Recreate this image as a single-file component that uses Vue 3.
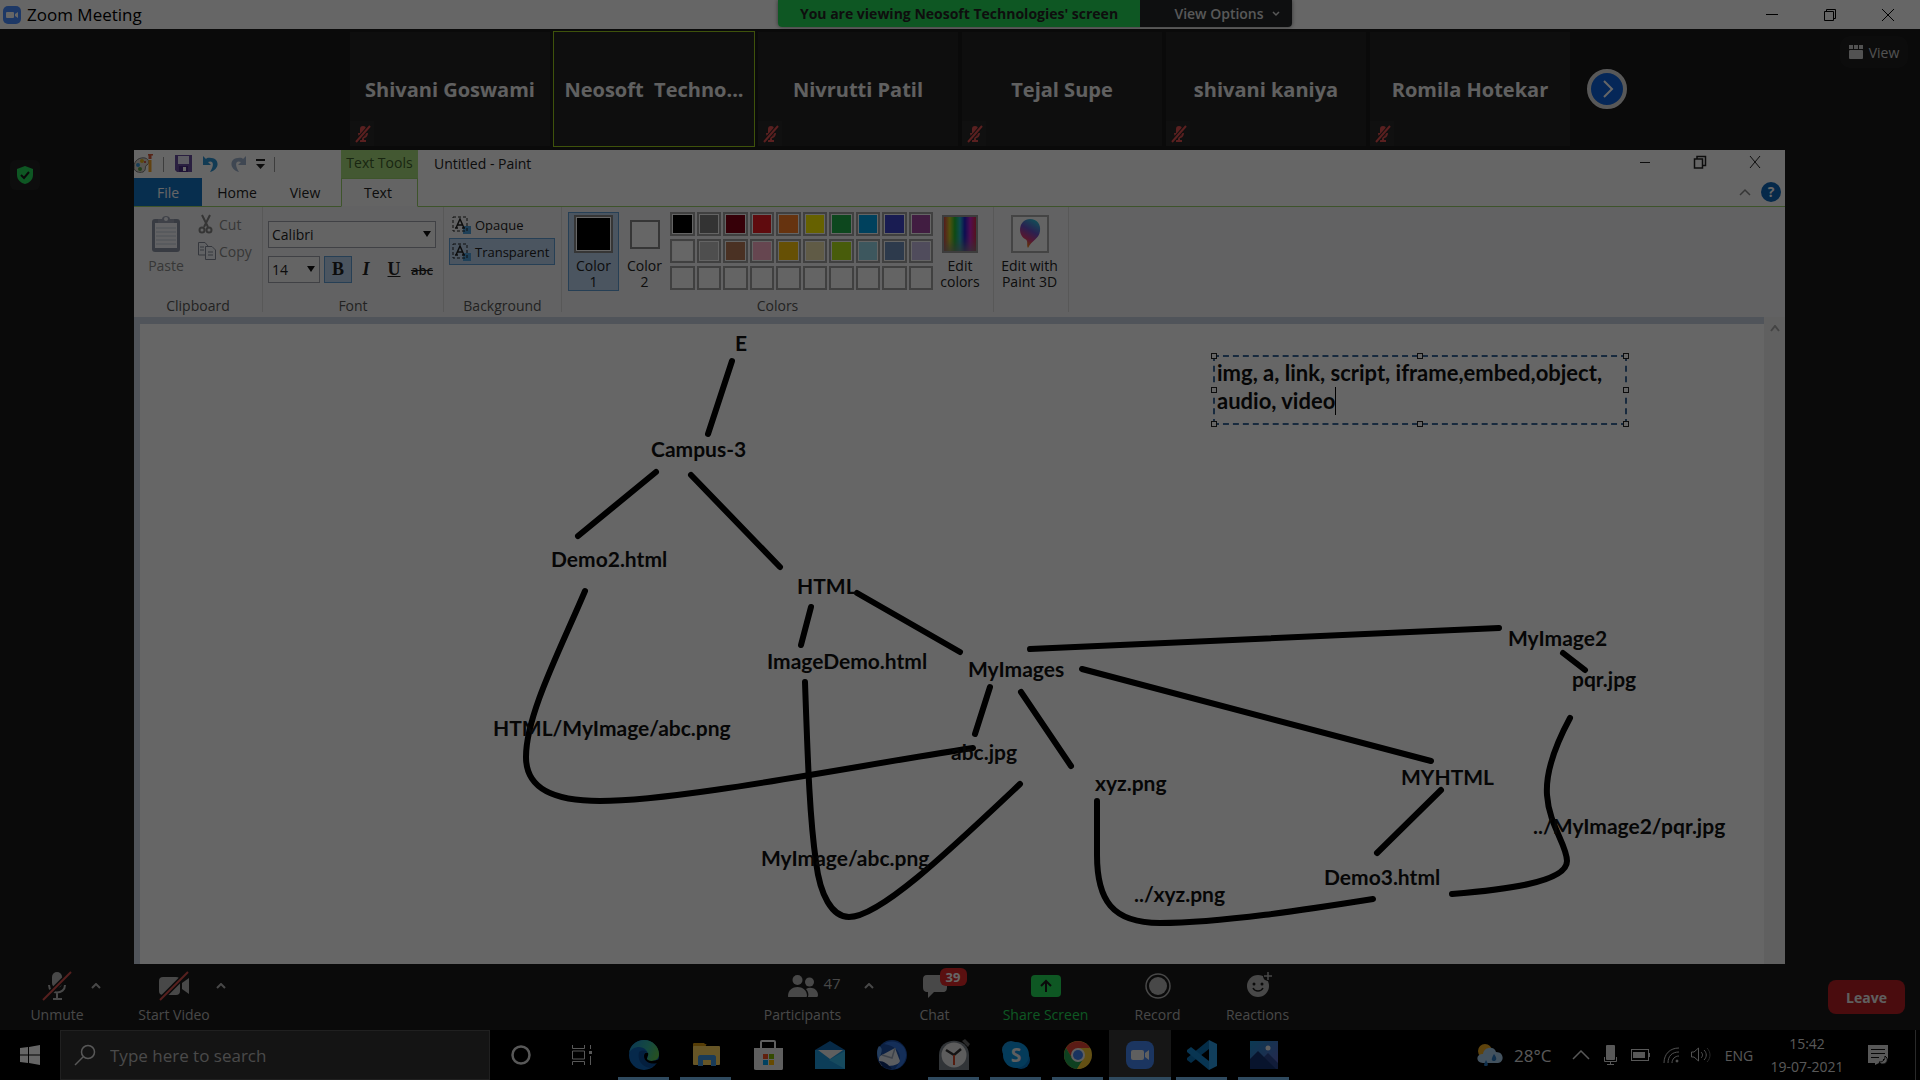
<script setup>
import { ref } from 'vue'

const tiles = [
  { name: 'Shivani Goswami', muted: true },
  { name: 'Neosoft\u00a0 Techno...', muted: false, active: true },
  { name: 'Nivrutti Patil', muted: true },
  { name: 'Tejal Supe', muted: true },
  { name: 'shivani kaniya', muted: true },
  { name: 'Romila Hotekar', muted: true },
]

const palette = [
  '#000000', '#7f7f7f', '#880015', '#ed1c24', '#ff7f27', '#fff200', '#22b14c', '#00a2e8', '#3f48cc', '#a349a4',
  '#ffffff', '#c3c3c3', '#b97a57', '#ffaec9', '#ffc90e', '#efe4b0', '#b5e61d', '#99d9ea', '#7092be', '#c8bfe7',
  '', '', '', '', '', '', '', '', '', '',
]

const strokes = [
  'M732 361 L708 434',
  'M656 472 L578 536',
  'M691 475 L780 567',
  'M811 607 L801 645',
  'M857 593 L960 652',
  'M990 687 L975 734',
  'M1021 692 L1071 766',
  'M1030 649 L1499 628',
  'M1082 669 L1431 761',
  'M1441 790 L1377 853',
  'M1563 653 L1585 670',
  'M585 591 C560 650 526 715 526 757 C526 788 552 801 600 801 C680 801 860 765 973 748',
  'M805 682 C808 770 810 820 816 862 C820 895 832 917 849 917 C880 917 950 850 1020 784',
  'M1097 801 L1097 855 C1097 900 1112 923 1160 923 C1220 923 1310 909 1373 899',
  'M1570 718 C1550 755 1546 780 1547 795 C1549 825 1567 845 1567 861 C1567 883 1500 890 1452 894',
]

const labels = [
  { t: 'E', x: 735, y: 351 },
  { t: 'Campus-3', x: 651, y: 457 },
  { t: 'Demo2.html', x: 551, y: 567 },
  { t: 'HTML', x: 797, y: 594 },
  { t: 'ImageDemo.html', x: 767, y: 669 },
  { t: 'MyImages', x: 968, y: 677 },
  { t: 'HTML/MyImage/abc.png', x: 493, y: 736 },
  { t: 'abc.jpg', x: 951, y: 760 },
  { t: 'MyImage/abc.png', x: 761, y: 866 },
  { t: 'xyz.png', x: 1095, y: 791 },
  { t: '../xyz.png', x: 1134, y: 902 },
  { t: 'Demo3.html', x: 1324, y: 885 },
  { t: 'MYHTML', x: 1401, y: 785 },
  { t: 'MyImage2', x: 1508, y: 646 },
  { t: 'pqr.jpg', x: 1572, y: 687 },
  { t: '../MyImage2/pqr.jpg', x: 1533, y: 834 },
]

const note = ref('img, a, link, script, iframe,embed,object,\naudio, video')
const handles = ['nw', 'n', 'ne', 'w', 'e', 'sw', 's', 'se']
const background = ref('transparent')
</script>

<template>
  <div class="screen">
    <header class="titlebar">
      <div class="app-title">
        <svg width="18" height="18" viewBox="0 0 18 18" aria-hidden="true">
          <rect width="18" height="18" rx="5" fill="#4a8cff" />
          <rect x="3" y="6" width="8" height="6" rx="1" fill="#fff" />
          <path d="M12 8 L15 6 V12 L12 10 Z" fill="#fff" />
        </svg>
        <span>Zoom Meeting</span>
      </div>
      <div class="banner">
        <span class="viewing">You are viewing Neosoft Technologies' screen</span>
        <button class="view-options">
          View Options
          <svg width="8" height="6" viewBox="0 0 8 6" aria-hidden="true"><path d="M1 1 L4 4 L7 1" fill="none" stroke="#ddd" stroke-width="1.5" /></svg>
        </button>
      </div>
      <div class="win-controls">
        <button aria-label="Minimize"><svg width="14" height="14" viewBox="0 0 14 14"><path d="M1 6.500 H13" stroke="#000" /></svg></button>
        <button aria-label="Restore"><svg width="14" height="14" viewBox="0 0 14 14" fill="none" stroke="#000"><path d="M1.500 3.500 H10.500 V12.500 H1.500 Z M3.500 3.500 V1.500 H12.500 V10.500 H10.500" /></svg></button>
        <button aria-label="Close"><svg width="14" height="14" viewBox="0 0 14 14"><path d="M1 1 L13 13 M13 1 L1 13" stroke="#000" /></svg></button>
      </div>
    </header>

    <section class="gallery" aria-label="Participants">
      <div class="strip">
        <div v-for="t in tiles" :key="t.name" class="tile" :class="{ active: t.active }">
          <span class="tile-name">{{ t.name }}</span>
          <span v-if="t.muted" class="tile-mic">
            <svg width="16" height="18" viewBox="0 0 16 18" aria-hidden="true">
              <rect x="5" y="1" width="6" height="10" rx="3" fill="#e05050" />
              <path d="M4 8 C4 14 12 14 12 8 M8 12 V16 M5 16 H11" fill="none" stroke="#e05050" stroke-width="2" />
              <path d="M1 17 L15 1" stroke="#242424" stroke-width="4" />
              <path d="M1 17 L15 1" stroke="#e05050" stroke-width="2" />
            </svg>
          </span>
        </div>
      </div>
      <button class="next" aria-label="Next participants">
        <svg width="12" height="20" viewBox="0 0 12 20"><path d="M2 2 L10 10 L2 18" fill="none" stroke="#fff" stroke-width="2" /></svg>
      </button>
      <button class="view-btn">
        <svg width="14" height="14" viewBox="0 0 14 14" fill="#ccc" aria-hidden="true"><rect width="4" height="4" /><rect x="5" width="4" height="4" /><rect x="10" width="4" height="4" /><rect y="5" width="14" height="9" rx="1" /></svg>
        View
      </button>
    </section>

    <main class="stage">
      <aside class="side">
        <span class="shield">
          <svg width="18" height="20" viewBox="0 0 18 20" aria-label="Encrypted" role="img">
            <path d="M9 1 L17 4 V10 C17 15 13 18 9 19 C5 18 1 15 1 10 V4 Z" fill="#23d959" />
            <path d="M5 10 L8 13 L13 7" fill="none" stroke="#1a1a1a" stroke-width="2" />
          </svg>
        </span>
      </aside>

      <div class="paint">
        <div class="paint-top">
          <div class="quick">
            <svg width="20" height="20" viewBox="0 0 20 20" aria-hidden="true">
              <path d="M0 13 C0 6 6 3 11 4 C15 5 16 9 13 11 C10 12 13 16 9 18 C5 19 0 18 0 13 Z" fill="#ddd8cc" stroke="#777" />
              <circle cx="4" cy="11" r="2" fill="#3a9ad9" /><circle cx="8" cy="7" r="2" fill="#e6b422" /><circle cx="6" cy="15" r="2" fill="#5aa04a" /><circle cx="11" cy="8" r="1" fill="#c33" />
              <path d="M14 0 H19 M16 1 V5" stroke="#d65a3a" stroke-width="3" /><path d="M16 6 V18" stroke="#f2a52c" stroke-width="3" />
            </svg>
            <i class="q-sep"></i>
            <svg width="18" height="18" viewBox="0 0 18 18" aria-hidden="true"><path d="M0 0 H17 V17 H2 L0 15 Z" fill="#6a4fa0" /><rect x="3" y="1" width="11" height="8" fill="#e9e6f4" /><rect x="4" y="11" width="9" height="6" fill="#4b2f86" /><rect x="8" y="12" width="3" height="4" fill="#fff" /></svg>
            <svg width="18" height="18" viewBox="0 0 18 18" aria-hidden="true"><path d="M1 1 V10 H9 L6 7 C11 5 13 9 8 17 C19 14 18 1 5 3 L4 4 Z" fill="#2e93d2" /></svg>
            <svg width="18" height="18" viewBox="0 0 18 18" aria-hidden="true"><path d="M17 1 V10 H9 L12 7 C7 5 5 9 10 17 C-1 14 0 1 13 3 L14 4 Z" fill="#9fb2cc" /></svg>
            <svg width="9" height="10" viewBox="0 0 9 10" aria-hidden="true"><path d="M0 1 H9" stroke="#222" stroke-width="2" /><path d="M0 5 H9 L4.500 10 Z" fill="#222" /></svg>
            <i class="q-sep"></i>
          </div>
          <span class="tools-tab">Text Tools</span>
          <span class="doc-title">Untitled - Paint</span>
          <div class="paint-controls">
            <button aria-label="Minimize Paint"><svg width="14" height="14" viewBox="0 0 14 14"><path d="M2 7.500 H12" stroke="#222" /></svg></button>
            <button aria-label="Restore Paint"><svg width="14" height="14" viewBox="0 0 14 14" fill="none" stroke="#222" stroke-width="1.500"><path d="M1.500 4 H9.500 V13 H1.500 Z M4 4 V1.500 H12.500 V10.500 H10" /></svg></button>
            <button aria-label="Close Paint"><svg width="14" height="14" viewBox="0 0 14 14"><path d="M2 1 L12 13 M12 1 L2 13" stroke="#222" /></svg></button>
          </div>
        </div>

        <nav class="tabs">
          <button class="tab file">File</button>
          <button class="tab home">Home</button>
          <button class="tab view">View</button>
          <button class="tab text">Text</button>
          <span class="tabs-fill">
            <svg width="12" height="8" viewBox="0 0 12 8" aria-hidden="true"><path d="M1 7 L6 2 L11 7" fill="none" stroke="#888" stroke-width="1.500" /></svg>
            <button class="help" aria-label="Help">?</button>
          </span>
        </nav>

        <div class="ribbon">
          <section class="group clipboard">
            <div class="group-body">
              <button class="tall muted">
                <svg width="32" height="38" viewBox="0 0 32 38" aria-hidden="true">
                  <rect x="2" y="4" width="28" height="33" rx="3" fill="#8d94a6" />
                  <rect x="5" y="8" width="22" height="25" fill="#f4f6fb" />
                  <path d="M6 13 H26 M6 17 H26 M6 21 H26 M6 25 H26 M6 29 H26" stroke="#c5cad8" />
                  <path d="M8 8 V4 H12 C12 0 20 0 20 4 H24 V8 Z" fill="#9ea4b4" /><circle cx="16" cy="4" r="2" fill="#f4f6fb" />
                </svg>
                Paste
              </button>
              <div class="stack">
                <button class="row muted">
                  <svg width="18" height="20" viewBox="0 0 18 20" fill="none" stroke="#858585" stroke-width="2" aria-hidden="true"><path d="M4 1 L10 13 M12 1 L6 13" /><circle cx="4" cy="16" r="2.500" /><circle cx="11" cy="16" r="2.500" /></svg>
                  Cut
                </button>
                <button class="row muted">
                  <svg width="18" height="20" viewBox="0 0 18 20" fill="#f3f5fa" stroke="#858b99" aria-hidden="true"><path d="M0.500 1.500 H7 L10 5 V14 H0.500 Z" /><path d="M7.500 5.500 H14 L17.500 9 V18.500 H7.500 Z" /><path d="M2 6 H6 M2 9 H6 M10 11 H15 M10 14 H15" /></svg>
                  Copy
                </button>
              </div>
            </div>
            <h2>Clipboard</h2>
          </section>

          <section class="group font">
            <div class="group-body col">
              <span class="pick"><select aria-label="Font family"><option>Calibri</option></select></span>
              <div class="font-row">
                <span class="pick small"><select aria-label="Font size"><option>14</option></select></span>
                <button class="fmt on" aria-label="Bold"><b>B</b></button>
                <button class="fmt" aria-label="Italic"><i>I</i></button>
                <button class="fmt" aria-label="Underline"><u>U</u></button>
                <button class="fmt strike" aria-label="Strikethrough"><s>abc</s></button>
              </div>
            </div>
            <h2>Font</h2>
          </section>

          <section class="group backdrop">
            <div class="group-body col tight">
              <button v-for="b in ['Opaque', 'Transparent']" :key="b" class="mode" :class="{ on: background === b.toLowerCase() }" @click="background = b.toLowerCase()">
                <svg width="20" height="20" viewBox="0 0 20 20" aria-hidden="true"><rect x="11" y="11" width="8" height="8" fill="#4ea0dc" /><rect x="1" y="2" width="14" height="14" fill="none" stroke="#222" stroke-dasharray="3 2" /><path d="M4 13 L8 4 L12 13 M5 10 H11 M3 13 H6 M10 13 H13" fill="none" stroke="#222" stroke-width="1.500" /></svg>
                {{ b }}
              </button>
            </div>
            <h2>Background</h2>
          </section>

          <section class="group colors">
            <div class="group-body">
              <button class="pot on"><span class="well black"></span>Color<br />1</button>
              <button class="pot"><span class="well white"></span>Color<br />2</button>
              <div class="palette">
                <button v-for="(c, i) in palette" :key="i" class="swatch" :aria-label="c || 'Empty color'"><span :style="{ background: c || '#fbfbfb' }"></span></button>
              </div>
              <button class="tall edit"><span class="rainbow"></span>Edit<br />colors</button>
            </div>
            <h2>Colors</h2>
          </section>

          <section class="group three-d">
            <div class="group-body">
              <button class="tall">
                <svg width="38" height="38" viewBox="0 0 38 38" aria-hidden="true">
                  <defs><linearGradient id="drop" x1="0.700" y1="0" x2="0.300" y2="1"><stop offset="0" stop-color="#2cc4dc" /><stop offset="0.400" stop-color="#6a52c8" /><stop offset="0.700" stop-color="#d43a7c" /><stop offset="0.900" stop-color="#ee7a20" /></linearGradient></defs>
                  <rect x="1" y="1" width="36" height="36" fill="#fafafa" stroke="#aaa" stroke-width="2" />
                  <path d="M19 4 C26 4 30 9 29 16 C28 24 21 25 17 33 C15 30 18 26 14 24 C6 19 8 4 19 4 Z" fill="url(#drop)" />
                </svg>
                Edit with<br />Paint 3D
              </button>
            </div>
          </section>
        </div>

        <div class="workspace">
          <div class="canvas">
            <svg class="drawing" width="1624" height="640" viewBox="140 324 1624 640">
              <path v-for="d in strokes" :key="d" :d="d" class="ink" />
              <text v-for="l in labels" :key="l.t" :x="l.x" :y="l.y" class="node">{{ l.t }}</text>
            </svg>
            <div class="textbox">
              <textarea v-model="note" aria-label="Canvas text" spellcheck="false"></textarea>
              <i class="cursor"></i>
              <i v-for="h in handles" :key="h" class="handle" :class="h"></i>
            </div>
          </div>
          <div class="scroll">
            <svg width="10" height="7" viewBox="0 0 10 7" aria-hidden="true"><path d="M1 6 L5 1 L9 6" fill="none" stroke="#aaa" stroke-width="2" /></svg>
          </div>
        </div>
      </div>
      <aside class="side right"></aside>
    </main>

    <footer class="controls">
      <div class="ctl-group left">
        <button class="ctl unmute">
          <span class="ico"><svg width="30" height="30" viewBox="0 0 30 30" aria-hidden="true">
            <rect x="10" y="1" width="10" height="16" rx="5" fill="#b4b4b4" /><path d="M7 14 C7 24 23 24 23 14 M15 21 V28 M11 28 H20" fill="none" stroke="#b4b4b4" stroke-width="2" />
            <path d="M1 29 L29 1" stroke="#1a1a1a" stroke-width="5" /><path d="M1 29 L29 1" stroke="#d8504c" stroke-width="2" />
          </svg></span>
          Unmute
        </button>
        <button class="caret" aria-label="Audio options"><svg width="10" height="6" viewBox="0 0 10 6"><path d="M1 5 L5 1 L9 5" fill="none" stroke="#b4b4b4" stroke-width="2" /></svg></button>
        <button class="ctl video">
          <span class="ico"><svg width="32" height="30" viewBox="0 0 32 30" aria-hidden="true">
            <rect x="1" y="6" width="21" height="18" rx="4" fill="#b4b4b4" /><path d="M24 12 L31 7 V23 L24 18 Z" fill="#b4b4b4" />
            <path d="M2 29 L30 1" stroke="#1a1a1a" stroke-width="5" /><path d="M2 29 L30 1" stroke="#d8504c" stroke-width="2" />
          </svg></span>
          Start Video
        </button>
        <button class="caret" aria-label="Video options"><svg width="10" height="6" viewBox="0 0 10 6"><path d="M1 5 L5 1 L9 5" fill="none" stroke="#b4b4b4" stroke-width="2" /></svg></button>
      </div>

      <div class="ctl-group center">
        <button class="ctl people">
          <span class="ico"><svg width="30" height="24" viewBox="0 0 30 24" fill="#b4b4b4" aria-hidden="true"><circle cx="9.500" cy="6" r="5" /><circle cx="21.500" cy="8" r="4.500" /><path d="M0 22 C0 10 19 10 19 22 C19 23 18 23 17 23 H2 C0 23 0 23 0 22 Z" /><path d="M20 23 C21 20 20 17 18 15 C23 12 30 15 30 21 C30 23 29 23 28 23 Z" /></svg><em>47</em></span>
          Participants
        </button>
        <button class="caret after-people" aria-label="Participant options"><svg width="10" height="6" viewBox="0 0 10 6"><path d="M1 5 L5 1 L9 5" fill="none" stroke="#b4b4b4" stroke-width="2" /></svg></button>
        <button class="ctl chat">
          <span class="ico"><svg width="26" height="24" viewBox="0 0 26 24" fill="#b4b4b4" aria-hidden="true"><path d="M5 1 H21 C24 1 25 3 25 5 V13 C25 16 24 18 21 18 H12 L6 24 V18 C2 18 1 16 1 13 V5 C1 3 2 1 5 1 Z" /></svg><strong>39</strong></span>
          Chat
        </button>
        <button class="ctl share">
          <span class="ico"><svg width="30" height="22" viewBox="0 0 30 22" aria-hidden="true"><rect width="30" height="22" rx="4" fill="#23d959" /><path d="M15 17 V6 M10 11 L15 6 L20 11" fill="none" stroke="#1a1a1a" stroke-width="2" /></svg></span>
          Share Screen
        </button>
        <button class="ctl record">
          <span class="ico"><svg width="26" height="26" viewBox="0 0 26 26" aria-hidden="true"><circle cx="13" cy="13" r="12" fill="none" stroke="#b4b4b4" stroke-width="1.500" /><circle cx="13" cy="13" r="9" fill="#b4b4b4" /></svg></span>
          Record
        </button>
        <button class="ctl react">
          <span class="ico"><svg width="30" height="30" viewBox="0 0 30 30" aria-hidden="true">
            <circle cx="15" cy="15" r="11" fill="#b4b4b4" /><circle cx="11" cy="13" r="1.500" fill="#1a1a1a" /><circle cx="19" cy="13" r="1.500" fill="#1a1a1a" /><path d="M10 17 C12 21 18 21 20 17" fill="none" stroke="#1a1a1a" stroke-width="1.500" />
            <circle cx="25" cy="5" r="5" fill="#1a1a1a" /><path d="M25 1 V9 M21 5 H29" stroke="#b4b4b4" stroke-width="1.500" />
          </svg></span>
          Reactions
        </button>
      </div>

      <button class="leave">Leave</button>
    </footer>

    <div class="taskbar">
      <button class="start" aria-label="Start"><svg width="20" height="20" viewBox="0 0 20 20" fill="#fff"><path d="M0 3 L8 2 V9.500 H0 Z M9 2 L20 0 V9.500 H9 Z M0 10.500 H8 V18 L0 17 Z M9 10.500 H20 V20 L9 18 Z" /></svg></button>
      <label class="search">
        <svg width="22" height="22" viewBox="0 0 22 22" fill="none" stroke="#ddd" stroke-width="1.500" aria-hidden="true"><circle cx="14" cy="8" r="6.500" /><path d="M9 13 L1 21" /></svg>
        <input type="text" placeholder="Type here to search" aria-label="Search" />
      </label>
      <button class="task narrow" aria-label="Cortana"><svg width="20" height="20" viewBox="0 0 20 20"><circle cx="10" cy="10" r="8.500" fill="none" stroke="#ddd" stroke-width="2.500" /></svg></button>
      <button class="task" aria-label="Task view"><svg width="20" height="20" viewBox="0 0 20 20" fill="none" stroke="#ddd"><path d="M0.500 0 V3.500 H12.500 V0 M0.500 20 V16.500 H12.500 V20 M0.500 6 H12.500 V14 H0.500 Z M18.500 0 V4 M18.500 11 V20" /><rect x="17.500" y="6.500" width="2" height="2" fill="#ddd" /></svg></button>
      <button class="task open" aria-label="Microsoft Edge">
        <svg width="32" height="32" viewBox="0 0 32 32">
          <defs><linearGradient id="edge-top" x1="0" y1="0.300" x2="1" y2="0.600"><stop offset="0" stop-color="#1c8fd0" /><stop offset="0.600" stop-color="#36b8a0" /><stop offset="1" stop-color="#62c950" /></linearGradient></defs>
          <circle cx="16" cy="16" r="15" fill="#1068bc" />
          <path d="M1 14 C2 6 9 1 16 1 C25 1 31 8 31 15 C31 20 27 22 23 22 C19 22 18 20 20 18 C21 12 16 8 11 8 C7 8 3 10 1 14 Z" fill="url(#edge-top)" />
          <path d="M11 13 C9 20 13 28 22 29 C26 27 28 25 29 23 C24 26 17 24 16 18 C15 15 17 13 19 13 C17 11 13 11 11 13 Z" fill="#0c4f9c" />
          <path d="M16 17 C16 14 18 13 20 14 C21 16 19 17 19 20 C20 22 24 23 32 20 C32 23 31 24 29 24 C23 26 16 23 16 17 Z" fill="#000" />
        </svg>
      </button>
      <button class="task open" aria-label="File Explorer">
        <svg width="30" height="28" viewBox="0 0 30 28"><path d="M2 3 C2 2 3 2 3 2 H13 L15 4 L14 8 H2 Z" fill="#d89a10" /><rect x="2" y="5" width="27" height="19" rx="1" fill="#ffd460" /><path d="M2 5 H13 L16 3 H2 Z" fill="#d89a10" /><path d="M7 25 V16 C7 15 8 14 9 14 H23 C24 14 25 15 25 16 V25 H20 V19 H12 V25 Z" fill="#3f93dc" /></svg>
      </button>
      <button class="task" aria-label="Microsoft Store">
        <svg width="30" height="30" viewBox="0 0 30 30"><path d="M8 9 V2 C8 1 8 1 9 1 H21 C22 1 22 1 22 2 V9" fill="none" stroke="#eee" stroke-width="2" /><path d="M1 8 H30 V28 C30 30 29 30 28 30 H3 C1 30 1 29 1 28 Z" fill="#eee" /><rect x="10" y="14" width="5" height="5" fill="#f25022" /><rect x="16" y="14" width="5" height="5" fill="#7fba00" /><rect x="10" y="20" width="5" height="5" fill="#00a4ef" /><rect x="16" y="20" width="5" height="5" fill="#ffb900" /></svg>
      </button>
      <button class="task" aria-label="Mail">
        <svg width="30" height="30" viewBox="0 0 30 30"><path d="M0 10 L15 1 L30 10 V29 H0 Z" fill="#1068b0" /><path d="M0 10 H30 V29 H0 Z" fill="#2098dc" /><path d="M30 11 V29 L14 20 Z" fill="#38b8ec" /><path d="M3 10 H28 L15 19 Z" fill="#eee" /></svg>
      </button>
      <button class="task" aria-label="Thunderbird">
        <svg width="32" height="32" viewBox="0 0 32 32"><circle cx="16" cy="16" r="15" fill="#1c50a8" /><path d="M8 5 C16 -1 31 4 30 17 C29 24 25 29 19 30 C29 18 23 7 8 5 Z" fill="#3474dc" /><path d="M3 7 C8 9 5 15 3 20 C0 15 1 10 3 7 Z" fill="#5a9ae8" /><path d="M6 27 C1 21 3 17 6 16 L19 9 L24 22 C22 27 14 27 6 27 Z" fill="#e4e8f0" /><path d="M6 16 L16 19 L19 9" fill="none" stroke="#9aa6ba" stroke-width="1.500" /><path d="M3 22 C8 22 12 25 16 30 C9 30 5 27 3 22 Z" fill="#0c2c6c" /></svg>
      </button>
      <button class="task open" aria-label="Alarms and Clock">
        <svg width="32" height="32" viewBox="0 0 32 32"><path d="M1 31 V16 C1 -3 31 -3 31 16 V31 Z" fill="#7a828a" /><path d="M24 2 L27 0 L32 5 L30 8 Z" fill="#666" /><circle cx="16" cy="16" r="12.500" fill="#e8e8e8" /><path d="M8 11 L16 16 L23 10" fill="none" stroke="#333" stroke-width="2.500" /><path d="M16 16 V26" stroke="#d84a2a" stroke-width="2" /></svg>
      </button>
      <button class="task open" aria-label="Skype">
        <svg width="30" height="30" viewBox="0 0 30 30"><circle cx="10" cy="10" r="9" fill="#1890d8" /><circle cx="20" cy="20" r="9" fill="#0878c8" /><circle cx="15" cy="15" r="13" fill="#0c94e0" /><text x="15" y="22" text-anchor="middle" class="skype-s">S</text></svg>
      </button>
      <button class="task open" aria-label="Google Chrome">
        <svg width="30" height="30" viewBox="0 0 30 30"><circle cx="15" cy="15" r="14" fill="#f8c834" /><path d="M3 8 C8 -1 22 -1 27 8 H15 L9 18 Z" fill="#e04436" /><path d="M3 8 L9 18 L21 18 L14 29 C3 28 -2 17 3 8 Z" fill="#24a050" /><path d="M27 8 C31 17 25 29 14 29 L21 18 V12 L15 8 Z" fill="#f8c834" /><circle cx="15" cy="15" r="7" fill="#eee" /><circle cx="15" cy="15" r="5" fill="#4080ee" /></svg>
      </button>
      <button class="task open current" aria-label="Zoom">
        <svg width="28" height="28" viewBox="0 0 28 28"><rect width="28" height="28" rx="8" fill="#4484f0" /><rect x="5" y="9" width="13" height="10" rx="2" fill="#eee" /><path d="M19 12 L23 9 V19 L19 16 Z" fill="#eee" /></svg>
      </button>
      <button class="task open" aria-label="Visual Studio Code">
        <svg width="30" height="30" viewBox="0 0 30 30"><path d="M22 0 L30 4 V26 L22 30 Z" fill="#2c9ce4" /><path d="M22 0 V9 L4 23 L0 20 V18 Z" fill="#0c70b4" /><path d="M22 30 V21 L4 7 L0 10 V12 Z" fill="#1484cc" /></svg>
      </button>
      <button class="task open" aria-label="Photos">
        <svg width="28" height="28" viewBox="0 0 28 28"><defs><linearGradient id="sky" x1="0" y1="0" x2="1" y2="1"><stop offset="0" stop-color="#1c90d0" /><stop offset="1" stop-color="#6460c0" /></linearGradient></defs><rect width="28" height="28" fill="url(#sky)" /><path d="M11 19 L18 12 L28 22 V28 H11 Z" fill="#2c4890" /><path d="M0 18 L8 10 L26 28 H0 Z" fill="#143470" /><circle cx="18" cy="7" r="2.500" fill="#eee" /></svg>
      </button>

      <div class="tray">
        <button class="weather">
          <svg width="28" height="24" viewBox="0 0 28 24" aria-hidden="true"><circle cx="9" cy="8" r="7" fill="#eca820" /><path d="M7 20 C-1 20 0 10 7 11 C8 3 19 3 20 9 C29 9 28 20 22 20 Z" fill="#a8ccec" /><path d="M18 11 C22 16 20 18 18 18 C15 18 15 16 18 11 Z M10 17 C13 22 12 23 10 23 C7 23 8 21 10 17 Z" fill="#2878c0" /></svg>
          28°C
        </button>
        <button class="cell" aria-label="Hidden icons"><svg width="18" height="10" viewBox="0 0 18 10"><path d="M1 9 L9 1 L17 9" fill="none" stroke="#ddd" stroke-width="1.500" /></svg></button>
        <span class="cell"><svg width="14" height="20" viewBox="0 0 14 20" aria-hidden="true"><rect x="2" y="0" width="9" height="15" rx="1" fill="#ddd" /><path d="M0.500 12 V16.500 H12.500 V12 M6.500 17 V19.500 M3 19.500 H10" fill="none" stroke="#ddd" /></svg></span>
        <span class="cell"><svg width="20" height="12" viewBox="0 0 20 12" aria-hidden="true"><rect x="0.500" y="0.500" width="17" height="11" fill="none" stroke="#ddd" /><rect x="2" y="3" width="12" height="6" fill="#ddd" /><rect x="18" y="4" width="1" height="4" fill="#ddd" /></svg></span>
        <span class="cell"><svg width="16" height="16" viewBox="0 0 16 16" fill="none" stroke="#ccc" aria-hidden="true"><path d="M1 16 C1 7 7 1 16 1 M5 16 C5 9 9 5 16 5 M9 16 C9 12 12 9 16 9" /><circle cx="14" cy="14" r="1" fill="#ccc" /></svg></span>
        <span class="cell"><svg width="20" height="18" viewBox="0 0 20 18" fill="none" stroke="#ccc" aria-hidden="true"><path d="M0.500 6 H3 L7.500 2 V15 L3 11 H0.500 Z M10 6 C12 8 12 10 10 12 M13 4 C16 7 16 11 13 14" /><path d="M16 2 C20 6 20 12 16 16" stroke="#666" /></svg></span>
        <button class="lang">ENG</button>
        <button class="clock"><span>15:42</span><span>19-07-2021</span></button>
        <button class="notify" aria-label="Notifications"><svg width="22" height="20" viewBox="0 0 22 20"><path d="M1 0 H21 V14 H16 V18 H12 L8 20 V18 H1 Z" fill="#ddd" /><path d="M4 4.500 H18 M4 8.500 H18 M4 12.500 H12" stroke="#111" /><path d="M18 11 C18 15 16 17 12 17 C14 21 22 19 20 13 Z" fill="#ddd" stroke="#111" /></svg></button>
      </div>
    </div>
    <div class="dim"></div>
  </div>
</template>

<style>
body {
  margin: 0;
  background: #000;
}
</style>

<style scoped>
.screen {
  position: relative;
  display: flex;
  flex-direction: column;
  min-height: 100vh;
  background: #1a1a1a;
  font-family: "Open Sans", "Noto Sans", sans-serif;
  font-size: 14px;
  color: #222;
}
.dim {
  position: absolute;
  inset: 0;
  background: rgba(0, 0, 0, 0.6);
  pointer-events: none;
  z-index: 10;
}
button,
select,
input,
textarea {
  font: inherit;
  color: inherit;
  border: 0;
  padding: 0;
  margin: 0;
  background: none;
  border-radius: 0;
  outline: none;
  box-sizing: border-box;
}
svg {
  display: block;
  flex: none;
}

.titlebar {
  display: flex;
  height: 29px;
  background: #fff;
}
.app-title {
  flex: 31 1 0;
  display: flex;
  align-items: center;
  gap: 6px;
  padding-left: 3px;
  box-sizing: border-box;
  font-size: 17px;
  color: #000;
}
.banner {
  display: flex;
  width: 514px;
  height: 27px;
  border-radius: 0 0 4px 4px;
  overflow: hidden;
  box-shadow: 0 0 4px rgba(0, 0, 0, 0.5);
}
.viewing {
  width: 362px;
  line-height: 27px;
  text-align: center;
  background: #23d959;
  color: #242424;
  font-weight: 700;
}
.view-options {
  flex: 1;
  display: flex;
  align-items: center;
  justify-content: center;
  gap: 8px;
  padding-left: 22px;
  background: #23272a;
  color: #ddd;
  font-weight: 600;
}
.win-controls {
  flex: 25 1 0;
  display: flex;
  justify-content: flex-end;
  padding-right: 3px;
  box-sizing: border-box;
}
.win-controls button {
  width: 58px;
  display: flex;
  align-items: center;
  justify-content: center;
}

.gallery {
  position: relative;
  display: flex;
  align-items: center;
  justify-content: center;
  height: 121px;
  padding-bottom: 1px;
  box-sizing: border-box;
}
.strip {
  display: flex;
  gap: 4px;
}
.tile {
  position: relative;
  width: 200px;
  height: 114px;
  box-sizing: border-box;
  display: flex;
  align-items: center;
  justify-content: center;
  background: #242424;
}
.tile.active {
  outline: 1px solid #9ccc1c;
}
.tile-name {
  font-size: 20px;
  font-weight: 700;
  color: #f0f0f0;
  white-space: nowrap;
}
.tile-mic {
  position: absolute;
  left: 0;
  bottom: 0;
  width: 24px;
  height: 25px;
  display: flex;
  align-items: center;
  justify-content: center;
  padding-left: 1px;
  box-sizing: border-box;
  background: #2a2a2a;
}
.next {
  position: absolute;
  left: calc(50% + 627px);
  width: 40px;
  height: 40px;
  border: 4px solid #ddd;
  border-radius: 50%;
  background: #0e63dc;
  display: flex;
  align-items: center;
  justify-content: center;
  padding-left: 2px;
}
.view-btn {
  position: absolute;
  right: 12px;
  top: 7px;
  width: 68px;
  height: 32px;
  border-radius: 10px;
  background: #1f1f1f;
  color: #ccc;
  display: flex;
  align-items: center;
  justify-content: center;
  gap: 6px;
}

.stage {
  flex: 1;
  display: flex;
}
.side {
  width: 134px;
}
.side.right {
  width: 135px;
}
.shield {
  display: flex;
  align-items: center;
  justify-content: center;
  width: 30px;
  height: 30px;
  margin: 10px;
  border-radius: 6px;
  background: #222;
}
.paint {
  flex: 1;
  display: flex;
  flex-direction: column;
  background: #fff;
}
.paint-top {
  display: flex;
  height: 28px;
}
.quick {
  display: flex;
  align-items: center;
  gap: 9px;
  width: 207px;
}
.q-sep {
  width: 1px;
  height: 15px;
  margin-right: 2px;
  background: #999;
}
.tools-tab {
  width: 77px;
  line-height: 26px;
  text-align: center;
  background: #a7dc7e;
  color: #3f5f2c;
}
.doc-title {
  margin-left: 16px;
  line-height: 28px;
}
.paint-controls {
  display: flex;
  margin-left: auto;
  padding-right: 3px;
}
.paint-controls button {
  width: 55px;
  height: 24px;
  display: flex;
  align-items: center;
  justify-content: center;
}

.tabs {
  display: flex;
  height: 29px;
}
.tab {
  border-bottom: 1px solid #9bd26c;
}
.tab.file {
  width: 68px;
  background: #1373c4;
  color: #fff;
}
.tab.home {
  width: 70px;
}
.tab.view {
  width: 69px;
  padding-right: 3px;
}
.tab.text {
  width: 77px;
  padding-right: 3px;
  border: 1px solid #9bd26c;
  border-bottom-color: #f5f6f7;
  background: #f9f9f9;
}
.tabs-fill {
  flex: 1;
  display: flex;
  align-items: center;
  justify-content: flex-end;
  gap: 10px;
  padding-right: 4px;
  border-bottom: 1px solid #9bd26c;
}
.help {
  width: 20px;
  height: 20px;
  border-radius: 50%;
  background: #0e66b8;
  color: #fff;
  font-weight: 700;
  line-height: 20px;
}

.ribbon {
  display: flex;
  height: 110px;
  background: #f5f6f7;
}
.group {
  display: flex;
  flex-direction: column;
  box-sizing: border-box;
  height: 105px;
  border-right: 1px solid #dcdcdc;
}
.group-body {
  flex: 1;
  display: flex;
}
.group-body.col {
  flex-direction: column;
}
.group h2 {
  margin: 0;
  font-size: 14px;
  font-weight: 400;
  line-height: 20px;
  height: 16px;
  text-align: center;
  color: #555;
}
.clipboard {
  width: 129px;
}
.font {
  width: 181px;
}
.backdrop {
  width: 118px;
}
.colors {
  width: 432px;
}
.three-d {
  width: 75px;
}
.muted {
  color: #8a8a8a;
}
.tall {
  display: flex;
  flex-direction: column;
  align-items: center;
  line-height: 16px;
  padding-top: 8px;
  gap: 5px;
  height: 84px;
}
.clipboard .tall {
  width: 64px;
}
.stack {
  display: flex;
  flex-direction: column;
  gap: 7px;
  padding-top: 7px;
}
.row {
  display: flex;
  align-items: center;
  gap: 3px;
  height: 20px;
}
.pick {
  position: relative;
  width: 168px;
  height: 27px;
  margin: 14px 0 8px 5px;
}
.pick::after {
  content: "";
  position: absolute;
  right: 5px;
  top: 10px;
  border: 4px solid transparent;
  border-top: 6px solid #111;
  border-bottom: 0;
}
.pick select {
  appearance: none;
  width: 100%;
  height: 100%;
  padding: 0 3px;
  border: 1px solid #a0a4ac;
  background: #fbfbfb;
}
.font-row {
  display: flex;
  padding-left: 5px;
}
.pick.small {
  width: 52px;
  margin: 0 4px 0 0;
}
.fmt {
  width: 28px;
  height: 27px;
  font-family: "Liberation Serif", serif;
  font-size: 18px;
}
.fmt.on,
.mode.on,
.pot.on {
  background: #bcd4f0;
  border: 1px solid #5f9fd4;
}
.fmt b,
.fmt i,
.fmt u {
  font-weight: 700;
}
.fmt.strike {
  font-family: "Open Sans", sans-serif;
  font-size: 13px;
  font-weight: 600;
}
.tight {
  padding: 4px 6px 0 5px;
}
.mode {
  display: flex;
  align-items: center;
  gap: 3px;
  height: 27px;
  padding-left: 2px;
  border: 1px solid transparent;
  font-size: 13px;
}
.pot {
  display: flex;
  flex-direction: column;
  align-items: center;
  width: 51px;
  height: 79px;
  margin-top: 5px;
  line-height: 16px;
  border: 1px solid transparent;
}
.pot.on {
  margin-left: 6px;
}
.well {
  box-sizing: border-box;
  width: 39px;
  height: 39px;
  margin: 2px 0 5px;
  border: 2px solid #888;
  outline: 1px solid #fff;
  outline-offset: -3px;
}
.well.black {
  background: #000;
}
.well.white {
  width: 30px;
  height: 30px;
  margin: 7px 0 9px;
  background: #fff;
}
.palette {
  display: grid;
  grid-template-columns: repeat(10, 1fr);
  grid-template-rows: repeat(3, 24px);
  column-gap: 2px;
  row-gap: 3px;
  width: 263px;
  padding: 5px 0 0;
}
.swatch {
  border: 2px solid #a0a0a0;
  padding: 1px;
  background: #fbfbfb;
}
.swatch span {
  display: block;
  height: 100%;
}
.tall.edit {
  width: 54px;
}
.rainbow {
  box-sizing: border-box;
  width: 36px;
  height: 38px;
  border: 2px solid #999;
  background: linear-gradient(90deg, #d44, #cc2 18%, #2b3 34%, #2bc 50%, #22c 65%, #c2c 82%, #d24);
  box-shadow: inset 0 -12px 12px -6px rgba(128, 128, 128, 0.8);
}
.three-d .tall {
  width: 71px;
  white-space: nowrap;
}

.workspace {
  flex: 1;
  display: flex;
  background: #c9d1e2;
}
.canvas {
  position: relative;
  flex: 1;
  min-height: 640px;
  margin: 7px 0 0 6px;
  background: #fff;
  overflow: hidden;
}
.drawing {
  position: absolute;
  left: 0;
  top: 0;
}
.ink {
  fill: none;
  stroke: #000;
  stroke-width: 6px;
  stroke-linecap: round;
}
.node {
  font-family: Lato, sans-serif;
  font-size: 21px;
  font-weight: 700;
  fill: #111;
}
.textbox {
  position: absolute;
  left: 1073px;
  top: 31px;
  box-sizing: border-box;
  width: 414px;
  height: 70px;
  border: 2px dashed #3c6a9c;
}
.textbox textarea {
  display: block;
  width: 100%;
  height: 100%;
  padding: 2px 0 0 2px;
  resize: none;
  overflow: hidden;
  white-space: pre;
  font-family: Lato, sans-serif;
  font-size: 22px;
  font-weight: 700;
  line-height: 28px;
  color: #111;
}
.cursor {
  position: absolute;
  left: 120px;
  top: 30px;
  width: 1px;
  height: 28px;
  background: #000;
}
.handle {
  position: absolute;
  box-sizing: border-box;
  width: 6px;
  height: 6px;
  border: 1px solid #222;
  background: #fff;
  left: calc(50% - 3px);
  top: calc(50% - 3px);
}
.handle.nw,
.handle.w,
.handle.sw {
  left: -4px;
}
.handle.ne,
.handle.e,
.handle.se {
  left: calc(100% - 2px);
}
.handle.nw,
.handle.n,
.handle.ne {
  top: -4px;
}
.handle.sw,
.handle.s,
.handle.se {
  top: calc(100% - 2px);
}
.scroll {
  width: 21px;
  background: #f0f0f0;
  display: flex;
  justify-content: center;
  padding-top: 8px;
  box-sizing: border-box;
}

.controls {
  display: flex;
  justify-content: space-between;
  height: 66px;
  color: #b4b4b4;
}
.ctl-group {
  display: flex;
}
.left {
  padding-left: 24px;
}
.ctl {
  display: flex;
  flex-direction: column;
  align-items: center;
  gap: 3px;
  padding-top: 6px;
  line-height: 20px;
  white-space: nowrap;
}
.ico {
  position: relative;
  display: flex;
  align-items: center;
  height: 32px;
}
.caret {
  display: flex;
  justify-content: center;
  width: 12px;
  padding-top: 19px;
}
.unmute {
  width: 66px;
}
.video {
  width: 82px;
  margin-left: 31px;
}
.people {
  width: 90px;
}
.after-people {
  margin-left: 15px;
}
.chat {
  width: 64px;
  margin-left: 28px;
}
.share {
  width: 100px;
  margin-left: 29px;
  color: #23d959;
}
.record {
  width: 64px;
  margin-left: 30px;
}
.react {
  width: 80px;
  margin-left: 28px;
}
.ico em {
  position: absolute;
  left: 36px;
  top: 3px;
  font-style: normal;
  font-size: 15px;
}
.ico strong {
  position: absolute;
  left: 18px;
  top: -2px;
  width: 27px;
  height: 18px;
  line-height: 18px;
  border-radius: 6px;
  background: #e02828;
  color: #fff;
  font-size: 13px;
  text-align: center;
}
.leave {
  width: 77px;
  height: 34px;
  margin: 16px 15px 0 0;
  border-radius: 8px;
  background: #b81e24;
  color: #eee;
  font-weight: 700;
}

.taskbar {
  display: flex;
  height: 50px;
  background: #000;
  color: #ddd;
}
.start {
  width: 60px;
  display: flex;
  align-items: center;
  justify-content: center;
}
.search {
  display: flex;
  align-items: center;
  gap: 14px;
  width: 430px;
  box-sizing: border-box;
  padding-left: 13px;
  border: 1px solid #505050;
  background: #333;
}
.search input {
  flex: 1;
  font-size: 17px;
}
.search input::placeholder {
  color: #b8b8b8;
  opacity: 1;
}
.task {
  position: relative;
  width: 62px;
  display: flex;
  align-items: center;
  justify-content: center;
}
.task.narrow {
  width: 61px;
}
.task.open::after {
  content: "";
  position: absolute;
  left: 5px;
  right: 6px;
  bottom: 0;
  height: 3px;
  background: #76b9ed;
}
.task.current {
  background: #383838;
}
.task.current::after {
  left: 0;
  right: 0;
}
.skype-s {
  font-size: 19px;
  font-weight: 700;
  fill: #eee;
}
.tray {
  display: flex;
  margin-left: auto;
  margin-right: 4px;
  padding-right: 11px;
  border-right: 1px solid #666;
}
.weather {
  display: flex;
  align-items: center;
  gap: 10px;
  width: 90px;
  font-size: 17px;
}
.cell {
  width: 30px;
  display: flex;
  align-items: center;
  justify-content: center;
}
.lang {
  width: 46px;
}
.clock {
  width: 90px;
  display: flex;
  flex-direction: column;
  align-items: center;
  justify-content: center;
  line-height: 23px;
}
.notify {
  width: 52px;
  display: flex;
  align-items: center;
  justify-content: center;
}
</style>
